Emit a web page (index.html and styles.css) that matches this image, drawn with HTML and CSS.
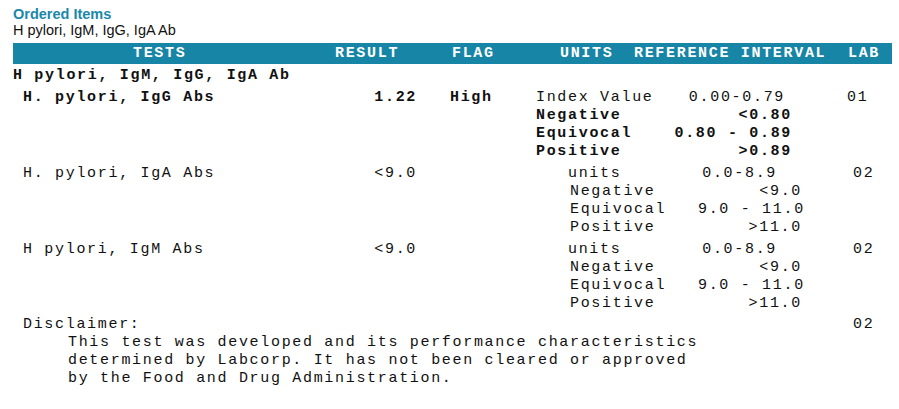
FILE: index.html
```html
<!DOCTYPE html>
<html lang="en">
<head>
<meta charset="utf-8">
<title>Ordered Items</title>
<link rel="stylesheet" href="styles.css">
</head>
<body>
<div class="report">
  <div class="ordered">
    <div class="ordered-title">Ordered Items</div>
    <div class="ordered-list">H pylori, IgM, IgG, IgA Ab</div>
  </div>

  <div class="thead">
    <span class="th th-tests">TESTS</span>
    <span class="th">RESULT</span>
    <span class="th">FLAG</span>
    <span class="th">UNITS</span>
    <span class="th">REFERENCE INTERVAL</span>
    <span class="th">LAB</span>
  </div>

  <div class="group">H pylori, IgM, IgG, IgA Ab</div>

  <div class="row">
    <div class="c-name b">H. pylori, IgG Abs</div>
    <div class="c-result b">1.22</div>
    <div class="c-flag b">High</div>
    <div class="c-ref ref-a">
      <span class="ref-label">Index Value</span><span class="ref-val ref-first">0.00-0.79</span>
      <span class="ref-label b">Negative</span><span class="ref-val b">&lt;0.80</span>
      <span class="ref-label b">Equivocal</span><span class="ref-val b">0.80 - 0.89</span>
      <span class="ref-label b">Positive</span><span class="ref-val b">&gt;0.89</span>
    </div>
    <div class="c-lab">01</div>
  </div>

  <div class="row">
    <div class="c-name">H. pylori, IgA Abs</div>
    <div class="c-result">&lt;9.0</div>
    <div class="c-flag"></div>
    <div class="c-ref ref-b">
      <span class="ref-label ref-unit">units</span><span class="ref-val ref-first">0.0-8.9</span>
      <span class="ref-label">Negative</span><span class="ref-val">&lt;9.0</span>
      <span class="ref-label">Equivocal</span><span class="ref-val">9.0 - 11.0</span>
      <span class="ref-label">Positive</span><span class="ref-val">&gt;11.0</span>
    </div>
    <div class="c-lab lab-b">02</div>
  </div>

  <div class="row">
    <div class="c-name">H pylori, IgM Abs</div>
    <div class="c-result">&lt;9.0</div>
    <div class="c-flag"></div>
    <div class="c-ref ref-b">
      <span class="ref-label ref-unit">units</span><span class="ref-val ref-first">0.0-8.9</span>
      <span class="ref-label">Negative</span><span class="ref-val">&lt;9.0</span>
      <span class="ref-label">Equivocal</span><span class="ref-val">9.0 - 11.0</span>
      <span class="ref-label">Positive</span><span class="ref-val">&gt;11.0</span>
    </div>
    <div class="c-lab lab-b">02</div>
  </div>

  <div class="disclaimer">
    <div class="disc-body">
      <div class="disc-title">Disclaimer:</div>
      <div class="disc-text">This test was developed and its performance characteristics<br>determined by Labcorp. It has not been cleared or approved<br>by the Food and Drug Administration.</div>
    </div>
    <div class="c-lab lab-b">02</div>
  </div>
</div>
</body>
</html>
```

FILE: styles.css
```css
html, body {
  margin: 0;
  padding: 0;
  background: #ffffff;
}

.report {
  padding: 6px 0 0 13px;
  width: 879px;
  color: #111111;
  font-family: "Liberation Mono", "Courier New", monospace;
  font-size: 15px;
  letter-spacing: 1.68px;
  line-height: 18px;
}

.ordered {
  font-family: "Liberation Sans", Arial, sans-serif;
  font-size: 14.5px;
  line-height: 16px;
  letter-spacing: 0;
}

.ordered-title {
  color: #1a88aa;
  font-weight: bold;
}

.ordered-list {
  color: #111111;
}

.thead {
  margin-top: 5px;
  height: 21px;
  background: #1785a6;
  color: #ffffff;
  font-weight: bold;
  display: grid;
  grid-template-columns: 322px 117px 108px 74px 214px auto;
  align-items: center;
  line-height: 21px;
}

.th-tests {
  padding-left: 120px;
}

.group {
  margin-top: 3px;
  font-weight: bold;
}

.b {
  font-weight: bold;
}

.row {
  margin-top: 4px;
  display: grid;
  grid-template-columns: 304px 100px 119px 311px auto;
  align-items: start;
}

.c-name {
  padding-left: 10px;
}

.c-result {
  text-align: right;
}

.c-flag {
  padding-left: 33px;
}

.c-ref {
  display: grid;
}

.ref-a {
  grid-template-columns: 130px 126px;
}

.ref-b {
  padding-left: 32px;
  grid-template-columns: 130px 104px;
}

.ref-b .ref-label {
  padding-left: 2px;
}

.ref-b .ref-label.ref-unit {
  padding-left: 0;
}

.ref-val {
  text-align: right;
  white-space: pre;
}

.ref-a .ref-first {
  padding-right: 7px;
}

.ref-b .ref-first {
  padding-right: 25px;
}

.lab-b {
  padding-left: 6px;
}

.disclaimer {
  margin-top: 3px;
  display: grid;
  grid-template-columns: 834px auto;
}

.disc-body {
  padding-left: 10px;
}

.disc-text {
  padding-left: 45px;
}
```
